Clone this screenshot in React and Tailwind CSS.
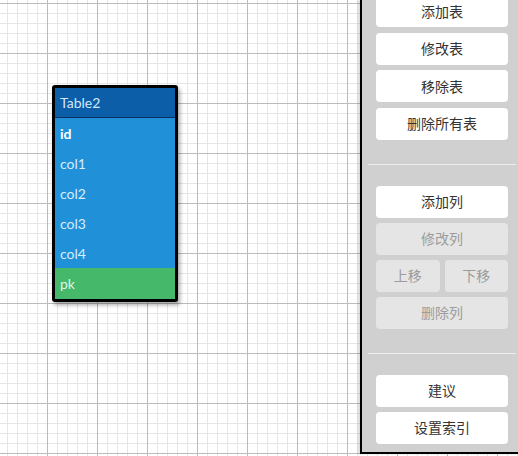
import React from 'react';

const columns = [
  { name: 'id', bold: true },
  { name: 'col1' },
  { name: 'col2' },
  { name: 'col3' },
  { name: 'col4' },
];

const TableNode = () => (
  <div className="absolute left-[52px] top-[85px] w-[126px] rounded-[3px] border-[3px] border-black bg-black shadow-[2px_3px_4px_rgba(0,0,0,0.35)] font-['Lato','Open_Sans',sans-serif] text-[14px]">
    <div className="flex h-[30px] items-center border-b border-[#0a2f63] bg-[#0c5ea8] px-[5px] text-[#d3e8fb]">
      Table2
    </div>
    {columns.map((c) => (
      <div
        key={c.name}
        className={
          c.bold
            ? 'flex h-[30px] items-center bg-[#2090d8] px-[5px] font-bold text-white'
            : 'flex h-[30px] items-center bg-[#2090d8] px-[5px] text-[#d6edfc]'
        }
      >
        {c.name}
      </div>
    ))}
    <div className="flex h-[31px] items-center bg-[#45b86a] px-[5px] text-[#dff5e5]">pk</div>
  </div>
);

const Btn = ({ children, disabled, className = '' }) => (
  <button
    className={
      (disabled ? 'bg-[#e5e5e5] text-[#9c9c9c] ' : 'bg-white text-[#333] ') +
      'flex h-[32px] items-center justify-center rounded-[4px] text-[14px] ' +
      className
    }
  >
    {children}
  </button>
);

const Sidebar = () => (
  <div className="flex h-[454px] w-[158px] shrink-0 flex-col overflow-hidden border-b-2 border-l-2 border-black bg-[#d0d0d0] font-['Noto_Sans_CJK_SC',sans-serif] shadow-[-2px_0_2px_rgba(0,0,0,0.15)]">
    <div className="-mt-[5px] flex flex-col gap-[5.5px] pl-[14px] pr-[10px]">
      <Btn>添加表</Btn>
      <Btn>修改表</Btn>
      <Btn>移除表</Btn>
      <Btn>删除所有表</Btn>
    </div>
    <div className="ml-[6px] mr-[2px] mt-[24px] h-px bg-[#ececec]" />
    <div className="mt-[21px] flex flex-col gap-[5px] pl-[14px] pr-[10px]">
      <Btn>添加列</Btn>
      <Btn disabled>修改列</Btn>
      <div className="flex gap-[5px]">
        <Btn disabled className="flex-1">上移</Btn>
        <Btn disabled className="flex-1">下移</Btn>
      </div>
      <Btn disabled>删除列</Btn>
    </div>
    <div className="ml-[6px] mr-[2px] mt-[24px] h-px bg-[#ececec]" />
    <div className="mt-[21px] flex flex-col gap-[5px] pl-[14px] pr-[10px]">
      <Btn>建议</Btn>
      <Btn>设置索引</Btn>
    </div>
  </div>
);

export default function App() {
  return (
    <div className="flex h-[456px] w-[518px] overflow-hidden bg-white bg-[linear-gradient(to_right,#bcbcbc_1px,transparent_1px),linear-gradient(to_bottom,#bcbcbc_1px,transparent_1px),linear-gradient(to_right,#e6e6e6_1px,transparent_1px),linear-gradient(to_bottom,#e6e6e6_1px,transparent_1px)] bg-[size:50px_50px,50px_50px,10px_10px,10px_10px] bg-[position:47px_3px,47px_3px,7px_3px,7px_3px]">
      <div className="relative flex-1">
        <TableNode />
      </div>
      <Sidebar />
    </div>
  );
}
